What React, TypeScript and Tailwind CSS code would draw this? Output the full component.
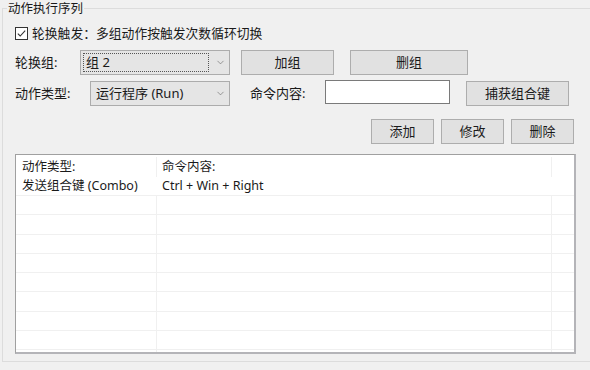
import { ChevronDown } from 'lucide-react';

const FONT = "font-['Noto_Sans','Noto_Sans_CJK_SC',sans-serif]";

function Button({ label, className = '' }: { label: string; className?: string }) {
  return (
    <button
      type="button"
      className={`h-[25px] border border-[#adadad] bg-[#e1e1e1] text-[13px] leading-none text-[#1a1a1a] ${className}`}
    >
      {label}
    </button>
  );
}

function Combo({ value, focused, className = '' }: { value: string; focused?: boolean; className?: string }) {
  return (
    <div className={`flex h-[25px] items-center border border-[#acacac] bg-[#e5e5e5] ${className}`}>
      <div className="flex flex-1 items-center self-stretch p-[2px]">
        <div
          className={`flex h-full flex-1 items-center pl-[2px] text-[13px] leading-none text-[#1a1a1a] ${
            focused ? 'border border-dotted border-[#555]' : 'border border-transparent'
          }`}
        >
          {value}
        </div>
      </div>
      <div className="flex w-[18px] items-center justify-center">
        <ChevronDown size={11} strokeWidth={1.3} className="text-[#606060]" />
      </div>
    </div>
  );
}

const ROWS = 9;

export default function App() {
  return (
    <div className={`h-[370px] w-[590px] overflow-hidden bg-[#f0f0f0] pt-0 pl-[2px] ${FONT}`}>
      <fieldset className="h-[362px] w-[600px] border border-[#dcdcdc]">
        <legend className="ml-[4px] px-[1px] text-[12.5px] leading-[17px] text-[#1a1a1a]">动作执行序列</legend>

        {/* 轮换触发 */}
        <div className="mt-[8px] flex h-[16px] items-center pl-[12px]">
          <div className="flex h-[13px] w-[13px] items-center justify-center border border-[#333] bg-white">
            <svg width="11" height="11" viewBox="0 0 11 11">
              <path d="M1.8 5.6L4.2 8L9.2 2.6" stroke="#333" strokeWidth="1.1" fill="none" />
            </svg>
          </div>
          <span className="ml-[4px] text-[12.8px] leading-none text-[#1a1a1a]">轮换触发：多组动作按触发次数循环切换</span>
        </div>

        {/* 轮换组 */}
        <div className="mt-[9px] flex h-[25px] items-center pl-[12px]">
          <span className="w-[65px] text-[13px] leading-none text-[#1a1a1a]">轮换组:</span>
          <Combo value="组 2" focused className="w-[150px]" />
          <Button label="加组" className="ml-[11px] w-[93px]" />
          <Button label="删组" className="ml-[16px] w-[118px]" />
        </div>

        {/* 动作类型 */}
        <div className="mt-[5px] flex h-[26px] items-center pl-[12px]">
          <span className="w-[75px] text-[13px] leading-none text-[#1a1a1a]">动作类型:</span>
          <Combo value="运行程序 (Run)" className="w-[140px]" />
          <span className="ml-[20px] w-[75px] text-[13px] leading-none text-[#1a1a1a]">命令内容:</span>
          <div className="h-[24px] w-[125px] self-start border border-[#7a7a7a] bg-white" />
          <Button label="捕获组合键" className="ml-[16px] w-[103px]" />
        </div>

        {/* 添加 / 修改 / 删除 */}
        <div className="mt-[13px] flex h-[25px] items-center gap-[7px] pl-[368px]">
          <Button label="添加" className="w-[63px]" />
          <Button label="修改" className="w-[63px]" />
          <Button label="删除" className="w-[63px]" />
        </div>

        {/* list */}
        <div className="mt-[10px] ml-[12px] h-[200px] w-[561px] overflow-hidden border-t border-l border-r-2 border-b-2 border-t-[#a0a0a0] border-l-[#a0a0a0] border-r-[#b4b4b8] border-b-[#b4b4b8] bg-white pt-[2px] text-[12.5px] text-[#1a1a1a]">
          <div className="flex h-[20px] items-center">
            <div className="w-[141px] self-stretch border-r border-[#f0f0f0] pl-[6px] leading-[20px]">动作类型:</div>
            <div className="w-[395px] self-stretch border-r border-[#f0f0f0] pl-[5px] leading-[20px]">命令内容:</div>
          </div>
          <div className="flex h-[19px] items-center border-b border-[#f0f0f0]">
            <div className="w-[141px] pl-[6px] leading-[18px]">发送组合键 (Combo)</div>
            <div className="w-[395px] pl-[5px] leading-[18px]">Ctrl + Win + Right</div>
          </div>
          {Array.from({ length: ROWS }).map((_, i) => (
            <div key={i} className="flex h-[19.3px] border-b border-[#f0f0f0]">
              <div className="w-[141px] border-r border-[#f0f0f0]" />
              <div className="w-[395px] border-r border-[#f0f0f0]" />
            </div>
          ))}
        </div>
      </fieldset>
    </div>
  );
}
